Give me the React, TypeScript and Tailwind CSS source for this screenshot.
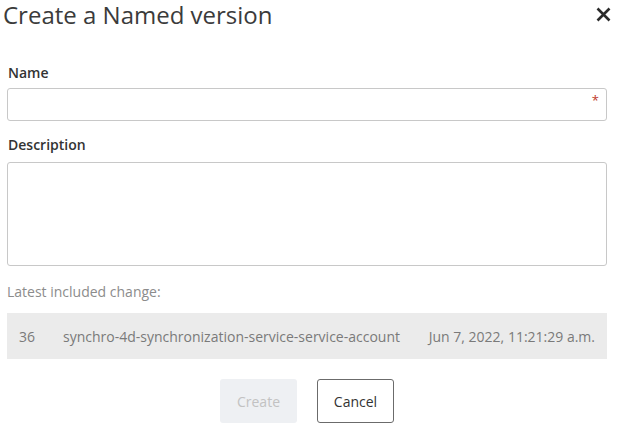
import React from "react";

export default function App() {
  return (
    <div
      className="w-[620px] h-[427px] bg-white overflow-hidden relative"
      style={{ fontFamily: '"Open Sans", "Liberation Sans", sans-serif' }}
    >
      <div className="flex items-start justify-between pl-[3px] pr-[9px]">
        <h1 className="text-[24px] leading-[30px] text-[#3b3b3b] font-normal">
          Create a Named version
        </h1>
        <button className="mt-[7px] w-[15px] h-[15px] flex items-center justify-center">
          <svg width="15" height="15" viewBox="0 0 15 15">
            <path d="M1.5 1.5 L13.5 13.5 M13.5 1.5 L1.5 13.5" stroke="#2b2b2b" strokeWidth="2.6" strokeLinecap="butt" />
          </svg>
        </button>
      </div>

      <div className="pl-[7px] pr-[13px]">
        <div className="mt-[33px] pl-[1px] text-[14px] leading-[20px] font-semibold text-[#333]">Name</div>
        <div className="mt-[5px] relative h-[33px] border border-[#c8c8c8] rounded-[3px] bg-white">
          <span className="absolute right-[7px] top-[2px] text-[#c0392b] text-[13px] leading-[18px]">*</span>
        </div>

        <div className="mt-[14px] pl-[1px] text-[14px] leading-[20px] font-semibold text-[#333]">Description</div>
        <div className="mt-[7px] h-[104px] border border-[#c8c8c8] rounded-[3px] bg-white" />

        <div className="mt-[16px] text-[14px] leading-[20px] text-[#8c8c8c]">Latest included change:</div>
        <div className="mt-[11px] h-[46px] bg-[#ebebeb] flex items-center justify-between text-[14px] text-[#7a7a7a] pl-[12px] pr-[12px]">
          <div className="flex items-center">
            <span className="w-[44px]">36</span>
            <span>synchro-4d-synchronization-service-service-account</span>
          </div>
          <span>Jun 7, 2022, 11:21:29 a.m.</span>
        </div>

        <div className="mt-[20px] flex justify-center gap-[20px]">
          <button className="w-[77px] h-[44px] rounded-[3px] bg-[#eef0f3] text-[14px] text-[#c2c2c2]">
            Create
          </button>
          <button className="w-[77px] h-[44px] rounded-[3px] border border-[#6b6b6b] bg-white text-[14px] text-[#333]">
            Cancel
          </button>
        </div>
      </div>
    </div>
  );
}
